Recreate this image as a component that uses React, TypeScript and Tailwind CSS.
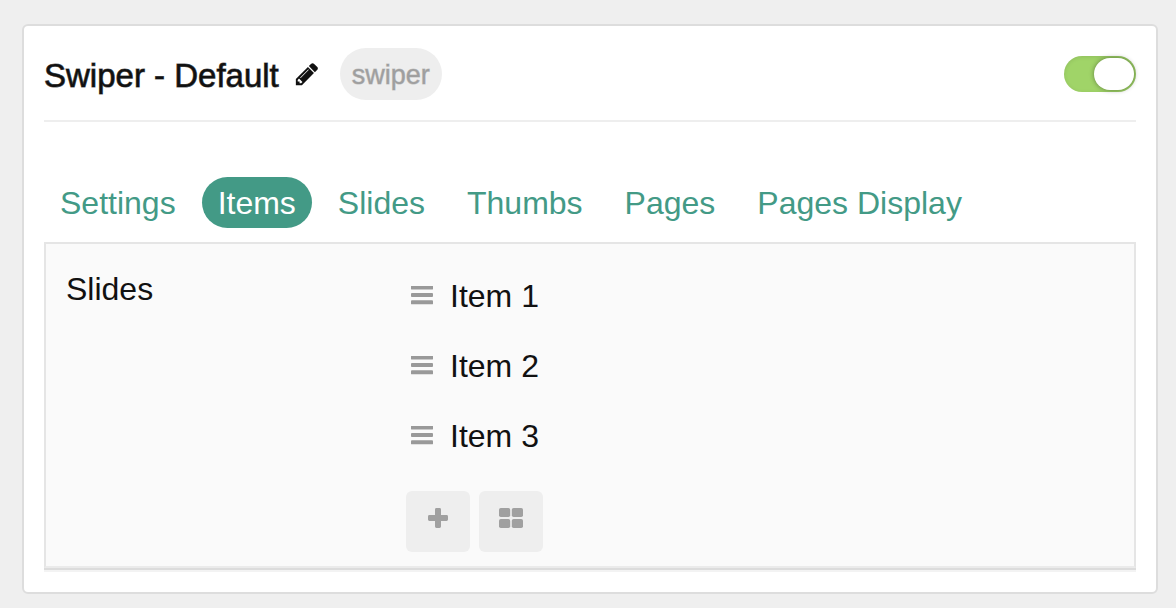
import { useState } from "react";

const tabs = ["Settings", "Items", "Slides", "Thumbs", "Pages", "Pages Display"];
const items = ["Item 1", "Item 2", "Item 3"];

function PencilIcon() {
  return (
    <svg viewBox="0 0 1792 1792" className="size-[26px] fill-current" aria-hidden="true">
      <path d="M491 1536l91-91-235-235-91 91v107h128v128h107zm523-928q0-22-22-22-10 0-17 7l-542 542q-7 7-7 17 0 22 22 22 10 0 17-7l542-542q7-7 7-17zm-54-192l416 416-832 832h-416v-416zm683 96q0 53-37 90l-166 166-416-416 166-165q36-38 90-38 53 0 91 38l235 234q37 39 37 91z" />
    </svg>
  );
}

function GripIcon() {
  return (
    <svg viewBox="0 0 22 20" className="h-5 w-[22px] fill-current" aria-hidden="true">
      <rect y="-0.4" width="22" height="4" rx="0.900" />
      <rect y="7" width="22" height="4" rx="0.900" />
      <rect y="14.300" width="22" height="4" rx="0.900" />
    </svg>
  );
}

function PlusIcon() {
  return (
    <svg viewBox="0 0 20 20" className="size-5 fill-current" aria-hidden="true">
      <path d="M8.400 0h3.200q1.400 0 1.400 1.400V7h5.600q1.400 0 1.400 1.400v3.200q0 1.400-1.400 1.400H13v5.600q0 1.400-1.400 1.400H8.400Q7 20 7 18.600V13H1.400Q0 13 0 11.600V8.400Q0 7 1.400 7H7V1.400Q7 0 8.400 0z" />
    </svg>
  );
}

function BlocksIcon() {
  return (
    <svg viewBox="0 0 24 20" className="h-5 w-6 fill-current" aria-hidden="true">
      <rect width="11.200" height="9.100" rx="1.800" />
      <rect x="12.800" width="11.200" height="9.100" rx="1.800" />
      <rect y="10.900" width="11.200" height="9.100" rx="1.800" />
      <rect x="12.800" y="10.900" width="11.200" height="9.100" rx="1.800" />
    </svg>
  );
}

export default function App() {
  const [enabled, setEnabled] = useState(true);
  const [active, setActive] = useState("Items");

  return (
    <main className="min-h-screen bg-[#efefef] pt-6 pr-[18px] pb-3.5 pl-[22px] font-['Liberation_Sans',Arial,sans-serif] text-[32px] leading-[50px] text-[#111]">
      <section className="rounded-md border-2 border-[#ddd] bg-white px-5 pb-6">
        <header className="flex h-24 items-center border-b-2 border-[#eee] pt-0.5">
          <h1 className="pt-1 text-[33px] [-webkit-text-stroke:1px_#111111b3]">Swiper - Default</h1>
          <button type="button" aria-label="Edit title" className="ml-[15px]">
            <PencilIcon />
          </button>
          <span className="ml-5 rounded-full bg-[#eee] px-3 pt-0.5 text-[27px] leading-[50px] text-[#9f9f9f] [-webkit-text-stroke:1px_#9f9f9f80]">
            swiper
          </span>
          <label className="relative ml-auto block h-9 w-[72px] cursor-pointer">
            <input
              type="checkbox"
              aria-label="Enabled"
              checked={enabled}
              onChange={(e) => setEnabled(e.target.checked)}
              className="peer absolute inset-0 size-full cursor-pointer appearance-none rounded-full bg-[#ccc] shadow-[inset_0_1px_4px_rgba(0,0,0,0.1)] checked:bg-[#a0d468]"
            />
            <span className="pointer-events-none absolute top-0.5 left-0.5 h-8 w-10 rounded-full bg-white shadow-[0_0_5px_rgba(0,0,0,0.4)] peer-checked:left-[30px]" />
          </label>
        </header>

        <nav className="mt-[55px] flex flex-wrap gap-x-[10px]">
          {tabs.map((tab) => (
            <a
              key={tab}
              href="#"
              onClick={(e) => {
                e.preventDefault();
                setActive(tab);
              }}
              className={
                tab === active
                  ? "rounded-full bg-[#439a86] px-4 pt-0.5 leading-[49px] text-white"
                  : "rounded-full px-4 pt-0.5 leading-[49px] text-[#439a86]"
              }
            >
              {tab}
            </a>
          ))}
        </nav>

        <div className="mt-3.5 flex border-2 border-[#e5e5e5] border-b-[#ebebeb] bg-[#fafafa] px-5 pt-5 pb-3.5 shadow-[0_2px_0_#dcdcdc,0_4px_0_#f3f3f3]">
          <h2 className="w-[340px] shrink-0">Slides</h2>
          <div className="flex-1">
            <ul className="flex flex-col gap-5 pt-[7px]">
              {items.map((item) => (
                <li key={item} className="flex items-center gap-[17px] pl-[5px]">
                  <span className="text-[#999]">
                    <GripIcon />
                  </span>
                  <a href="#">{item}</a>
                </li>
              ))}
            </ul>
            <div className="mt-[30px] flex gap-[9px]">
              <button
                type="button"
                aria-label="Add item"
                className="flex h-[61px] w-16 justify-center rounded-md bg-[#eee] pt-[17px] text-[#a0a0a0]"
              >
                <PlusIcon />
              </button>
              <button
                type="button"
                aria-label="Edit all items"
                className="flex h-[61px] w-16 justify-center rounded-md bg-[#eee] pt-[17px] text-[#a0a0a0]"
              >
                <BlocksIcon />
              </button>
            </div>
          </div>
        </div>
      </section>
    </main>
  );
}
